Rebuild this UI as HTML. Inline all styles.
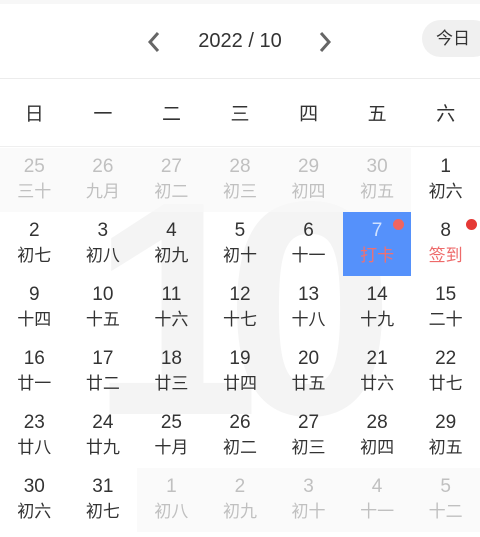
<!DOCTYPE html><html><head><meta charset="utf-8"><style>
body{margin:0;width:480px;height:537px;overflow:hidden;background:#fff;font-family:"Liberation Sans","Noto Sans CJK SC",sans-serif;position:relative}
.top{position:absolute;left:0;top:0;width:480px;height:4px;background:#f7f7f7}
.hd{position:absolute;top:4px;left:0;width:480px;height:74px;border-bottom:1px solid #ececec}
.title{position:absolute;left:0;width:480px;top:26px;text-align:center;font-size:20px;color:#333}
.today{position:absolute;left:422px;top:16px;width:70px;height:37px;border-radius:19px;background:#f0f0f0;font-size:17px;color:#333;line-height:37px;padding-left:14px;box-sizing:border-box}
.wk{position:absolute;top:79px;left:0;width:480px;height:67px;border-bottom:1px solid #efefef;display:flex}
.wk div{flex:1;text-align:center;line-height:72px;font-size:19px;color:#333}
.wm{position:absolute;left:0;width:480px;top:156px;text-align:center;font-size:305px;font-weight:bold;color:#f4f4f4;line-height:305px;letter-spacing:-35px;text-indent:-30px}
.grid{position:absolute;top:148px;left:0;width:480px}
.row{display:flex;height:64px}
.c{width:68.57px;text-align:center;position:relative;color:#333}
.c b{display:block;font-weight:normal;font-size:19px;padding-top:8px;line-height:22px}
.c i{display:block;font-style:normal;font-size:17px;line-height:22px;margin-top:3px}
.o{color:#c0c0c0;background:rgba(248,248,248,.7)}
.sel{background:#5591fb}
.sel b{color:#d0e1ff}.sel i{color:#f07070}
.dot{position:absolute;width:11px;height:11px;border-radius:50%;background:#e53935;top:7px;right:7px}
.sel .dot{background:#ef6560}
</style></head><body>
<div class="top"></div>
<div class="wm">10</div>
<div class="hd">
<svg style="position:absolute;left:146px;top:26px" width="16" height="24"><path d="M12 3 L4 12 L12 21" stroke="#666" stroke-width="3" fill="none"/></svg>
<div class="title">2022 / 10</div>
<svg style="position:absolute;left:317px;top:26px" width="16" height="24"><path d="M4 3 L12 12 L4 21" stroke="#666" stroke-width="3" fill="none"/></svg>
<div class="today">今日</div>
</div>
<div class="wk"><div>日</div><div>一</div><div>二</div><div>三</div><div>四</div><div>五</div><div>六</div></div>
<div class="grid">
<div class="row"><div class="c o"><b>25</b><i>三十</i></div><div class="c o"><b>26</b><i>九月</i></div><div class="c o"><b>27</b><i>初二</i></div><div class="c o"><b>28</b><i>初三</i></div><div class="c o"><b>29</b><i>初四</i></div><div class="c o"><b>30</b><i>初五</i></div><div class="c"><b>1</b><i>初六</i></div></div>
<div class="row"><div class="c"><b>2</b><i>初七</i></div><div class="c"><b>3</b><i>初八</i></div><div class="c"><b>4</b><i>初九</i></div><div class="c"><b>5</b><i>初十</i></div><div class="c"><b>6</b><i>十一</i></div><div class="c sel"><b>7</b><i>打卡</i><span class="dot"></span></div><div class="c"><b>8</b><i style="color:#ee6a6a">签到</i><span class="dot" style="right:3px"></span></div></div>
<div class="row"><div class="c"><b>9</b><i>十四</i></div><div class="c"><b>10</b><i>十五</i></div><div class="c"><b>11</b><i>十六</i></div><div class="c"><b>12</b><i>十七</i></div><div class="c"><b>13</b><i>十八</i></div><div class="c"><b>14</b><i>十九</i></div><div class="c"><b>15</b><i>二十</i></div></div>
<div class="row"><div class="c"><b>16</b><i>廿一</i></div><div class="c"><b>17</b><i>廿二</i></div><div class="c"><b>18</b><i>廿三</i></div><div class="c"><b>19</b><i>廿四</i></div><div class="c"><b>20</b><i>廿五</i></div><div class="c"><b>21</b><i>廿六</i></div><div class="c"><b>22</b><i>廿七</i></div></div>
<div class="row"><div class="c"><b>23</b><i>廿八</i></div><div class="c"><b>24</b><i>廿九</i></div><div class="c"><b>25</b><i>十月</i></div><div class="c"><b>26</b><i>初二</i></div><div class="c"><b>27</b><i>初三</i></div><div class="c"><b>28</b><i>初四</i></div><div class="c"><b>29</b><i>初五</i></div></div>
<div class="row"><div class="c"><b>30</b><i>初六</i></div><div class="c"><b>31</b><i>初七</i></div><div class="c o"><b>1</b><i>初八</i></div><div class="c o"><b>2</b><i>初九</i></div><div class="c o"><b>3</b><i>初十</i></div><div class="c o"><b>4</b><i>十一</i></div><div class="c o"><b>5</b><i>十二</i></div></div>
</div>
</body></html>
